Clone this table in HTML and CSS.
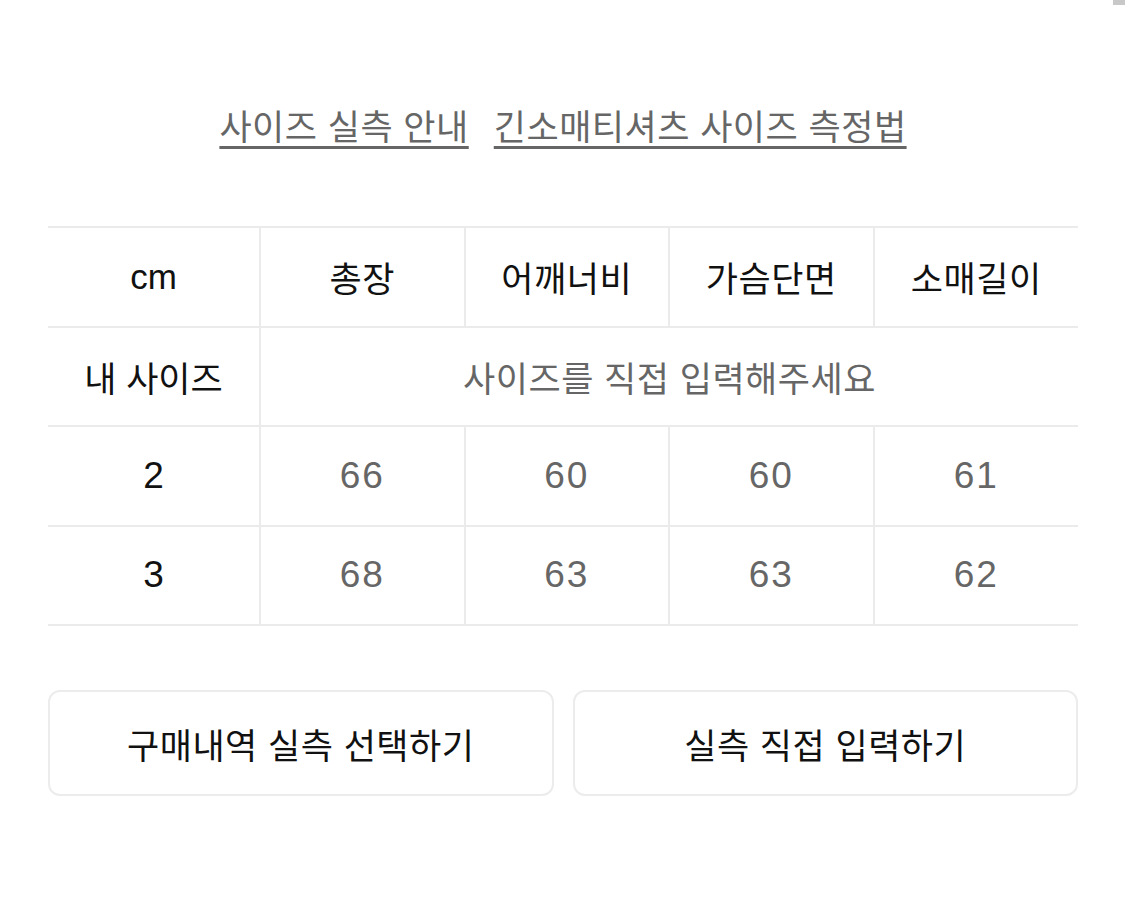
FILE: index.html
```html
<!DOCTYPE html>
<html lang="ko">
<head>
<meta charset="utf-8">
<link rel="stylesheet" href="styles.css">
</head>
<body>
<div class="scroll-thumb"></div>
<main class="page">
  <nav class="links">
    <a class="link" href="#">사이즈 실측 안내</a>
    <a class="link" href="#">긴소매티셔츠 사이즈 측정법</a>
  </nav>
  <table class="size-table">
    <colgroup>
      <col class="c-first"><col><col><col><col>
    </colgroup>
    <tr>
      <th>cm</th><th>총장</th><th>어깨너비</th><th>가슴단면</th><th>소매길이</th>
    </tr>
    <tr>
      <th>내 사이즈</th><td colspan="4" class="hint">사이즈를 직접 입력해주세요</td>
    </tr>
    <tr>
      <th class="num">2</th><td class="num">66</td><td class="num">60</td><td class="num">60</td><td class="num">61</td>
    </tr>
    <tr>
      <th class="num">3</th><td class="num">68</td><td class="num">63</td><td class="num">63</td><td class="num">62</td>
    </tr>
  </table>
  <div class="actions">
    <button class="btn">구매내역 실측 선택하기</button>
    <button class="btn">실측 직접 입력하기</button>
  </div>
</main>
</body>
</html>
```

FILE: styles.css
```css
html, body {
  margin: 0;
  padding: 0;
  background: #fff;
}
body {
  font-family: "Liberation Sans", "Noto Sans CJK KR", sans-serif;
  color: #111;
}
.scroll-thumb {
  position: absolute;
  top: 0;
  right: 0;
  width: 12px;
  height: 5px;
  background: #c8c8c8;
}
.page {
  padding: 0 47px 0 48px;
}
.links {
  display: flex;
  justify-content: center;
  align-items: flex-start;
  gap: 25px;
  padding-top: 106px;
  height: 226px;
  box-sizing: border-box;
}
.link {
  font-size: 35px;
  line-height: 44px;
  color: #666;
  text-decoration: underline;
  text-decoration-thickness: 3px;
  text-underline-offset: 6px;
  text-decoration-color: #666;
  letter-spacing: 0.5px;
}
.size-table {
  width: 100%;
  border-collapse: collapse;
  table-layout: fixed;
}
.c-first {
  width: 212px;
}
.size-table th,
.size-table td {
  height: 97.5px;
  padding: 0;
  text-align: center;
  font-size: 35px;
  font-weight: 400;
  border: 2px solid #ebebeb;
  letter-spacing: 0.5px;
}
.size-table th {
  color: #111;
}
.size-table td {
  color: #666;
}
.size-table .num {
  font-size: 37px;
  letter-spacing: 2px;
}
.size-table th:first-child {
  letter-spacing: 0;
}
.size-table tr > :first-child {
  border-left: none;
}
.size-table tr > :last-child {
  border-right: none;
}
.actions {
  display: flex;
  gap: 19px;
  margin-top: 64px;
}
.btn {
  flex: 1;
  height: 106px;
  background: #fff;
  border: 2px solid #ececec;
  border-radius: 12px;
  font-family: "Liberation Sans", "Noto Sans CJK KR", sans-serif;
  font-size: 35px;
  letter-spacing: 0.5px;
  color: #111;
  padding: 0;
}
```
